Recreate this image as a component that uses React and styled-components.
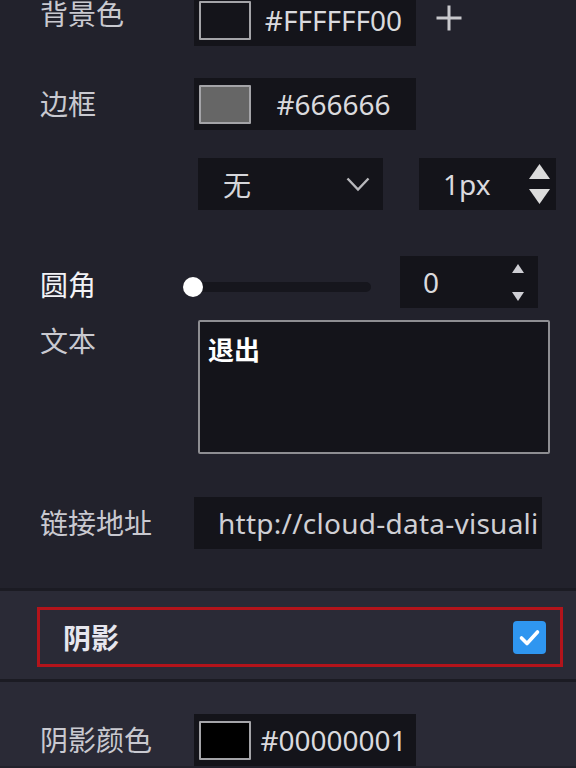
import React from 'react'
import styled, { createGlobalStyle } from 'styled-components'

const GlobalStyle = createGlobalStyle`
  html, body {
    margin: 0;
    padding: 0;
    background: #22222c;
  }
  body {
    font-family: "Noto Sans", "Noto Sans CJK SC", sans-serif;
    overflow: hidden;
  }
`

// small drawings
const PlusIcon = () => (
  <svg width="28" height="28" viewBox="0 0 28 28">
    <path d="M14 1.5V26.5M1.5 14H26.5" stroke="#c8c8cc" strokeWidth="3" fill="none" />
  </svg>
)

const Chevron = () => (
  <svg width="24" height="16" viewBox="0 0 24 16">
    <path d="M1.5 2.5L12 13.5L22.5 2.5" stroke="#b8b8bc" strokeWidth="2.4" fill="none" />
  </svg>
)

const Triangle = ({ up, w, h, color }) => (
  <svg width={w} height={h} viewBox={`0 0 ${w} ${h}`}>
    <path d={up ? `M0 ${h}L${w / 2} 0L${w} ${h}Z` : `M0 0L${w} 0L${w / 2} ${h}Z`} fill={color} />
  </svg>
)

const CheckIcon = () => (
  <svg width="33" height="33" viewBox="0 0 33 33">
    <path d="M8.5 17L14 22.5L24.5 11" stroke="#fff" strokeWidth="3.6" fill="none" strokeLinecap="round" strokeLinejoin="round" />
  </svg>
)

//main function
export default function App() {
  return (
    <>
      <GlobalStyle />
      <Panel>
        <Section $pb={39}>
          <Row $mt={-6} $align="flex-start">
            <Label $dy={7} $lh={26}>背景色</Label>
            <ColorInput>
              <Swatch $fill="transparent" />
              <HexText>#FFFFFF00</HexText>
            </ColorInput>
            <AddButton><PlusIcon /></AddButton>
          </Row>

          <Row $mt={32}>
            <Label>边框</Label>
            <ColorInput>
              <Swatch $fill="#666666" />
              <HexText>#666666</HexText>
            </ColorInput>
          </Row>

          <Row $mt={28}>
            <Label />
            <Select>
              <span>无</span>
              <Chevron />
            </Select>
            <NumberInput $w={137} $ml={36} $pl={24}>
              <NumText>1px</NumText>
              <Spinner $gap={10} $mr={6}>
                <Triangle up w={21} h={15} color="#dcdcdc" />
                <Triangle w={21} h={15} color="#dcdcdc" />
              </Spinner>
            </NumberInput>
          </Row>

          <Row $mt={46}>
            <Label $bright $dy={6}>圆角</Label>
            <Slider>
              <Track />
              <Knob />
            </Slider>
            <NumberInput $w={138} $ml={29} $pl={23}>
              <NumText>0</NumText>
              <Spinner $gap={19} $mr={14}>
                <Triangle up w={12} h={9} color="#cfcfd4" />
                <Triangle w={12} h={9} color="#cfcfd4" />
              </Spinner>
            </NumberInput>
          </Row>

          <Row $mt={12} $align="flex-start">
            <Label $dy={1}>文本</Label>
            <TextArea>退出</TextArea>
          </Row>

          <Row $mt={43}>
            <Label>链接地址</Label>
            <LinkInput>http://cloud-data-visuali</LinkInput>
          </Row>
        </Section>

        <Section $light $divider $pt={16} $pb={12}>
          <Highlight>
            <ToggleLabel>阴影</ToggleLabel>
            <Checkbox><CheckIcon /></Checkbox>
          </Highlight>
        </Section>

        <Section $light $divider $pt={32}>
          <Row $mt={0}>
            <Label>阴影颜色</Label>
            <ColorInput>
              <Swatch $fill="#000000" />
              <HexText>#00000001</HexText>
            </ColorInput>
          </Row>
        </Section>
      </Panel>
    </>
  )
}

//styled components
const Panel = styled.div`
  width: 576px;
  height: 768px;
  overflow: hidden;
  display: flex;
  flex-direction: column;
`

const Section = styled.div`
  display: flex;
  flex-direction: column;
  padding: ${p => p.$pt || 0}px 13px ${p => p.$pb || 0}px 40px;
  background: ${p => (p.$light ? '#2a2a36' : '#22222c')};
  border-top: ${p => (p.$divider ? '3px solid #1b1b23' : 'none')};
`

const Row = styled.div`
  display: flex;
  align-items: ${p => p.$align || 'center'};
  margin-top: ${p => p.$mt}px;
`

const Label = styled.div`
  width: 154px;
  flex-shrink: 0;
  font-size: 28px;
  line-height: ${p => p.$lh || 40}px;
  color: ${p => (p.$bright ? '#f2f2f6' : '#c9c9d0')};
  margin-top: ${p => p.$dy || 0}px;
  white-space: nowrap;
`

const ColorInput = styled.div`
  width: 222px;
  height: 52px;
  display: flex;
  align-items: center;
  background: #14141a;
  padding-left: 5px;
  box-sizing: border-box;
`

const Swatch = styled.div`
  width: 52px;
  height: 39px;
  box-sizing: border-box;
  border: 2px solid #a4a4a8;
  border-radius: 1px;
  background: ${p => p.$fill};
  flex-shrink: 0;
`

const HexText = styled.div`
  flex: 1;
  text-align: center;
  font-size: 28px;
  color: #dadade;
  line-height: 52px;
`

const AddButton = styled.div`
  margin-left: 19px;
  margin-top: 10px;
  display: flex;
`

const Select = styled.div`
  width: 185px;
  height: 52px;
  margin-left: 4px;
  box-sizing: border-box;
  padding: 0 13px 0 25px;
  display: flex;
  align-items: center;
  justify-content: space-between;
  background: #14141a;
  font-size: 28px;
  color: #d6d6da;
`

const NumberInput = styled.div`
  width: ${p => p.$w}px;
  height: 52px;
  margin-left: ${p => p.$ml}px;
  padding-left: ${p => p.$pl}px;
  box-sizing: border-box;
  display: flex;
  align-items: center;
  background: #14141a;
`

const NumText = styled.div`
  flex: 1;
  font-size: 28px;
  color: #dadade;
`

const Spinner = styled.div`
  display: flex;
  flex-direction: column;
  gap: ${p => p.$gap}px;
  margin-right: ${p => p.$mr}px;

  svg {
    display: block;
  }
`

const Slider = styled.div`
  position: relative;
  width: 188px;
  height: 20px;
  margin-left: -11px;
  margin-top: 10px;
  display: flex;
  align-items: center;
`

const Track = styled.div`
  flex: 1;
  height: 10px;
  margin-left: 10px;
  border-radius: 5px;
  background: #16161d;
`

const Knob = styled.div`
  position: absolute;
  left: 0;
  top: 0;
  width: 20px;
  height: 20px;
  border-radius: 50%;
  background: #ffffff;
`

const TextArea = styled.div`
  width: 352px;
  height: 134px;
  margin-left: 4px;
  box-sizing: border-box;
  border: 2px solid #8e8e92;
  border-radius: 2px;
  background: #14141a;
  padding: 10px 8px;
  font-size: 26px;
  font-weight: 700;
  line-height: 36px;
  color: #ffffff;
`

const LinkInput = styled.div`
  width: 348px;
  height: 52px;
  box-sizing: border-box;
  padding-left: 24px;
  background: #14141a;
  font-size: 28px;
  letter-spacing: 0.25px;
  line-height: 52px;
  color: #cfcfd4;
  white-space: nowrap;
  overflow: hidden;
`

const Highlight = styled.div`
  margin-left: -3px;
  height: 60px;
  box-sizing: border-box;
  border: 3px solid #b3141b;
  display: flex;
  align-items: center;
  justify-content: space-between;
  padding: 0 14px 0 23px;
`

const ToggleLabel = styled.div`
  font-size: 28px;
  font-weight: 600;
  color: #e6e6ee;
`

const Checkbox = styled.div`
  width: 33px;
  height: 33px;
  border-radius: 4px;
  background: #2f96f0;
  display: flex;

  svg {
    display: block;
  }
`
